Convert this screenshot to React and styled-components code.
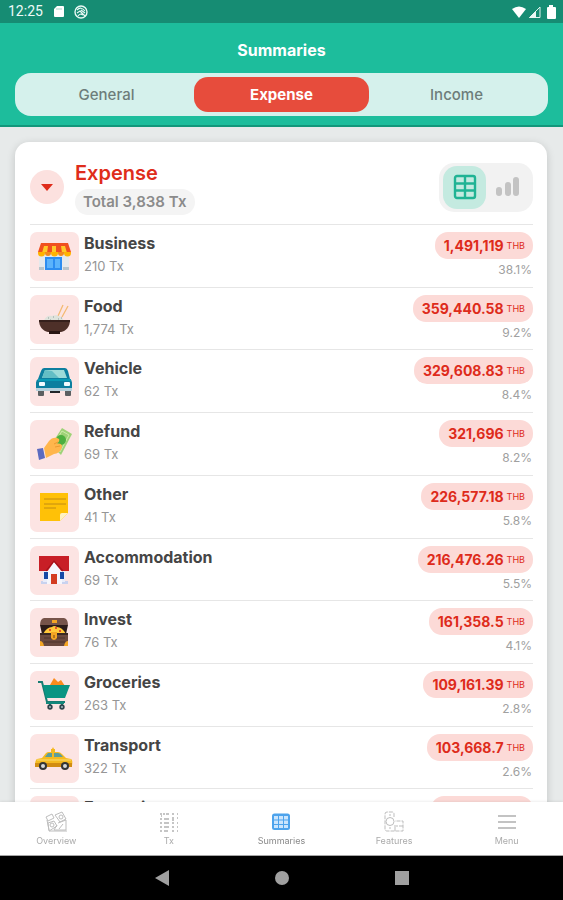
import React, { useState } from "react";
import styled, { createGlobalStyle } from "styled-components";

const GlobalStyle = createGlobalStyle`
  * { box-sizing: border-box; }
  body { margin: 0; background: #e7eaea; }
  button { font: inherit; border: 0; padding: 0; margin: 0; background: none; cursor: pointer; }
  h1, h2, h3, p, ul { margin: 0; padding: 0; }
  svg { display: block; flex: none; }
`;

const Screen = styled.div`
  height: 100vh;
  display: flex;
  flex-direction: column;
  font-family: "Inter", "Liberation Sans", sans-serif;
  color: #454545;
  overflow: hidden;
`;

const StatusBar = styled.div`
  flex: none;
  height: 23px;
  padding: 0 6px 0 8px;
  background: #168c73;
  color: #eefaf7;
  display: flex;
  align-items: center;
  gap: 10px;
  font: 400 14px/23px Roboto, sans-serif;
`;

const StatusRight = styled.div`
  margin-left: auto;
  display: flex;
  align-items: center;
  gap: 2px;
`;

const Header = styled.header`
  flex: none;
  background: #1dbd9c;
  border-bottom: 2px solid #12977b;
  padding: 16px 15px 9px;
`;

const Title = styled.h1`
  color: #fff;
  font-size: 16px;
  line-height: 22px;
  font-weight: 700;
  text-align: center;
  margin-bottom: 12px;
`;

const Segments = styled.div`
  display: flex;
  padding: 4px;
  border-radius: 16px;
  background: #d5f1ec;
`;

const Segment = styled.button`
  && {
    flex: 1;
    height: 35px;
    border-radius: 14px;
    font-size: 15px;
    font-weight: ${(p) => (p.$active ? 700 : 500)};
    color: ${(p) => (p.$active ? "#fff" : "#6d7d7a")};
    background: ${(p) => (p.$active ? "#e74c3c" : "transparent")};
  }
`;

const Content = styled.main`
  flex: 1;
  min-height: 0;
  overflow-y: auto;
  scrollbar-width: none;
  padding: 15px 16px 15px 15px;
  background: #e7eaea;
`;

const Card = styled.section`
  background: #fff;
  border-radius: 14px;
  padding: 0 14px 0 15px;
  box-shadow: 0 2px 8px rgba(0, 0, 0, 0.16);
`;

const CardHead = styled.div`
  display: flex;
  align-items: center;
  height: 82px;
  padding-top: 8px;
`;

const Collapse = styled.button`
  && {
    width: 34px;
    height: 34px;
    border-radius: 50%;
    background: #fce1df;
    display: grid;
    place-items: center;
    margin-right: 11px;
  }
`;

const HeadText = styled.div`
  display: flex;
  flex-direction: column;
  align-items: flex-start;
  gap: 3px;
`;

const CardTitle = styled.h2`
  color: #df2c1b;
  font-size: 20px;
  line-height: 26px;
  font-weight: 600;
`;

const TotalPill = styled.p`
  background: #f4f4f4;
  color: #8b8b8b;
  border-radius: 13px;
  padding: 0 8px;
  font-size: 15px;
  line-height: 26px;
  font-weight: 600;
`;

const Toggle = styled.div`
  margin-left: auto;
  display: flex;
  background: #f2f2f2;
  border-radius: 15px;
  padding: 3px 4px;
`;

const ToggleButton = styled.button`
  && {
    width: 43px;
    height: 43px;
    border-radius: 14px;
    display: grid;
    place-items: center;
    background: ${(p) => (p.$active ? "#c4eae0" : "transparent")};
  }
`;

const List = styled.ul`
  list-style: none;
  display: grid;
  grid-auto-rows: 1fr;
  min-height: 627px;
`;

const Row = styled.li`
  display: flex;
  align-items: flex-start;
  border-top: 1px solid #e6e6e6;
  padding: 7px 0 5px;
`;

const Tile = styled.div`
  width: 49px;
  height: 49px;
  border-radius: 7px;
  background: #fce4e3;
  margin-right: 5px;
`;

const Labels = styled.div`
  flex: 1;
  min-width: 0;
`;

const Name = styled.h3`
  font-size: 16px;
  line-height: 23px;
  font-weight: 700;
`;

const Count = styled.p`
  font-size: 13px;
  line-height: 22px;
  color: #969696;
`;

const Figures = styled.div`
  display: flex;
  flex-direction: column;
  align-items: flex-end;
`;

const Amount = styled.p`
  background: #fcdad7;
  color: #de2b1b;
  border-radius: 13px;
  padding: 0 8px 0 9px;
  font-size: 14px;
  line-height: 27px;
  font-weight: 700;
  white-space: nowrap;
  display: flex;
  align-items: center;
  gap: 3px;
`;

const Currency = styled.span`
  font-size: 9px;
  font-weight: 400;
`;

const Percent = styled.p`
  font-size: 12px;
  line-height: 22px;
  color: #a0a0a0;
  padding-right: 1px;
`;

const Tabs = styled.nav`
  flex: none;
  display: flex;
  height: 54px;
  background: #fff;
  border-bottom: 1px solid #a5a5a5;
  box-shadow: 0 0 3px rgba(0, 0, 0, 0.12);
  z-index: 1;
`;

const Tab = styled.a`
  flex: 1;
  display: flex;
  flex-direction: column;
  align-items: center;
  padding-top: 9px;
  gap: 2px;
  text-decoration: none;
  font-size: 9px;
  line-height: 12px;
  color: ${(p) => (p.$active ? "#8a8a8a" : "#ababab")};
`;

const SystemBar = styled.div`
  flex: none;
  height: 44px;
  background: #000;
  display: flex;
  justify-content: center;
  align-items: center;
  gap: 104px;
`;

const SystemButton = styled.button`
  && {
    width: 16px;
    height: 16px;
  }
`;

const StoreIcon = () => (
  <>
    <path d="M9 21h30v17H9z" fill="#e5e9ec" />
    <path d="M9 35h5v3H9zM33 35h6v3h-6z" fill="#b8c4ca" />
    <path d="M15 25h17v13H15z" fill="#2c8df0" />
    <path d="M17 27h6v9h-6zM25 27h5v9h-5z" fill="#5bb3fb" />
    <path d="M11 11h27l3 9H8z" fill="#f0501f" />
    <path d="M14 14h4l-1 7h-5zM22 14h4v7h-4zM31 14h4l2 7h-5z" fill="#ffc928" />
    <path d="M8 20h7v1a3 3 0 0 1-7 0zM21 20h7v1a3 3 0 0 1-7 0zM34 20h7v1a3 3 0 0 1-7 0z" fill="#ffb300" />
    <path d="M15 20h6v1a3 3 0 0 1-6 0zM28 20h6v1a3 3 0 0 1-6 0z" fill="#f28a1d" />
  </>
);

const BowlIcon = () => (
  <>
    <path d="m28 21 5-11M32 22l6-11" stroke="#f4ba72" strokeWidth="1.3" />
    <path d="M14 26c1-4 4-6 8-5 4-2 10 0 12 5z" fill="#dfe3dc" />
    <path d="M18 23h1m4-1h1m4 2h1m-9 1h1m10-2h1" stroke="#8fa09b" strokeWidth="1.2" />
    <path d="M9 25h31c0 7-4 11-9 12H18C13 36 9 32 9 25z" fill="#4e3029" />
    <path d="M9 25h31v2H9z" fill="#36201c" />
    <path d="M19 36h11v3H19z" fill="#291613" />
  </>
);

const CarIcon = () => (
  <>
    <rect x="8" y="33" width="6" height="6" rx="1" fill="#5c5f61" />
    <rect x="35" y="33" width="6" height="6" rx="1" fill="#5c5f61" />
    <path d="M14 11h21q2 0 3 3l2 8q2 1 2 4v6H6v-6q0-3 2-4l3-8q1-3 3-3z" fill="#0d7f9f" />
    <path d="M15 13h19l3 8H12z" fill="#9ddbd9" />
    <path d="m15 13 7 1 7 7H12z" fill="#63bec5" />
    <path d="M8 22h33v2H8z" fill="#0a9ab4" />
    <path d="M6 31h36v3H6z" fill="#b7d1dc" />
    <rect x="9" y="25" width="6" height="4" rx="1" fill="#f3fbff" />
    <rect x="34" y="25" width="6" height="4" rx="1" fill="#f3fbff" />
    <path d="M20 34h10v2H20z" fill="#20272b" />
  </>
);

const CashIcon = () => (
  <>
    <path d="m32 8 10 6-11 21-10-10z" fill="#9ed277" />
    <path d="m32 11 7 4-9 17-6-8z" fill="none" stroke="#cdeaa9" />
    <circle cx="31" cy="20" r="5" fill="#4caf3f" />
    <path d="m14 28 5-7c2-3 6-4 8-3l2 1c1 2-1 4-3 5 3-1 6 0 6 2 0 5-5 8-8 8l-8 4z" fill="#ffb64c" />
    <path d="m24 24 4-2m-3 5 5-1" stroke="#ec9931" fill="none" />
    <path d="m7 29 6-1 2 10-6 2z" fill="#5c6bc0" />
  </>
);

const NoteIcon = () => (
  <>
    <path d="M10 10h28v20l-8 8H10z" fill="#ffc107" />
    <path d="M30 38v-6q0-2 2-2h6z" fill="#fff2c3" />
    <path d="M14 16h22M14 21h22M14 25h12" stroke="#c28c12" strokeWidth="1" />
  </>
);

const HouseIcon = () => (
  <>
    <path d="M11 35h27v3H11z" fill="#c9d2ef" />
    <path d="M13 23h22v13H13z" fill="#e9edfa" />
    <path d="M9 10h30v15H9z" fill="#c81e26" />
    <path d="m24 16 8 10v12H17V26z" fill="#f5f6fc" />
    <path d="m16 25 8-10 9 10" fill="none" stroke="#a5121b" strokeWidth="1.2" />
    <path d="M14 26h4v7h-4zM30 26h4v7h-4z" fill="#1749a5" />
    <path d="M21 28h6v10h-6z" fill="#d33c21" />
  </>
);

const ChestIcon = () => (
  <>
    <path d="M14 10h20q4 1 4 7l-2 1H12l-2-1q0-6 4-7z" fill="#76544a" />
    <path d="M10 17h28l-2 9H12z" fill="#2b1b18" />
    <path d="M13 26q4-7 9-7 2-2 5 0 5 0 9 7z" fill="#ffc83a" />
    <path d="M19 22h2m4-2h2m2 3h2" stroke="#e6512d" strokeWidth="2" />
    <path d="M10 26h28v10q-1 2-3 2H13q-3 0-3-3z" fill="#6a493f" />
    <path d="M14 30h21M14 34h21" stroke="#4d342d" />
    <path d="M10 26h28" stroke="#3a2824" strokeWidth="2" />
    <path d="M10 33q3 0 4 5h-4zM38 33q-3 0-4 5h4zM21 24h6v6q-3 4-6 0zM22 12h5v3h-5z" fill="#f4a524" />
    <path d="M24 27v3" stroke="#754414" />
  </>
);

const CartIcon = () => (
  <>
    <path d="m20 14 4-7 4 4 3-2 4 6z" fill="#fb8c1d" />
    <path d="M8 11h4l5 20h18" fill="none" stroke="#167c72" strokeWidth="2" />
    <path d="M13 14h27l-5 13H16z" fill="#0a9583" />
    <path d="m16 32h18M20 36v-4M32 36v-4" stroke="#13877b" strokeWidth="2" />
    <circle cx="20" cy="36" r="2.7" fill="#30434b" />
    <circle cx="32" cy="36" r="2.7" fill="#30434b" />
    <circle cx="20" cy="36" r="1" fill="#a7bac1" />
    <circle cx="32" cy="36" r="1" fill="#a7bac1" />
  </>
);

const TaxiIcon = () => (
  <>
    <path d="M21 18v-3h1l1-2 1 2h1v3z" fill="#f5b81e" />
    <path d="m12 24 4-5q1-1 3-1h9q2 0 4 2l4 4 5 1q2 1 1 7H5q0-6 2-7z" fill="#f4ba20" />
    <path d="m15 23 3-4h4v4zM24 19h4q2 0 5 4h-9z" fill="#5c9e9b" />
    <path d="M5 29h37v4H5z" fill="#d28d11" />
    <path d="M7 26h34" stroke="#fadd70" />
    <circle cx="13" cy="32" r="4" fill="#323536" />
    <circle cx="35" cy="32" r="4" fill="#323536" />
    <circle cx="13" cy="32" r="2" fill="#d6d8d9" />
    <circle cx="35" cy="32" r="2" fill="#d6d8d9" />
  </>
);

const TicketIcon = () => (
  <path d="M10 14h29v7q-4 3 0 6v7H10v-7q4-3 0-6z" fill="#ef8a35" />
);

const categories = [
  { name: "Business", count: "210", amount: "1,491,119", percent: "38.1%", Icon: StoreIcon },
  { name: "Food", count: "1,774", amount: "359,440.58", percent: "9.2%", Icon: BowlIcon },
  { name: "Vehicle", count: "62", amount: "329,608.83", percent: "8.4%", Icon: CarIcon },
  { name: "Refund", count: "69", amount: "321,696", percent: "8.2%", Icon: CashIcon },
  { name: "Other", count: "41", amount: "226,577.18", percent: "5.8%", Icon: NoteIcon },
  { name: "Accommodation", count: "69", amount: "216,476.26", percent: "5.5%", Icon: HouseIcon },
  { name: "Invest", count: "76", amount: "161,358.5", percent: "4.1%", Icon: ChestIcon },
  { name: "Groceries", count: "263", amount: "109,161.39", percent: "2.8%", Icon: CartIcon },
  { name: "Transport", count: "322", amount: "103,668.7", percent: "2.6%", Icon: TaxiIcon },
  { name: "Entertainment", count: "58", amount: "93,240.5", percent: "2.4%", Icon: TicketIcon },
];

const OverviewIcon = () => (
  <g fill="none" stroke="#bdbdbd" strokeWidth="1">
    <path d="m1 6 6-3 2 4-6 3zM10 4l7-3 4 7-6 3zM3 12l6-2 3 5-8 5zM13 12l8-3v10H9l3-5M4 20h18" />
    <circle cx="7" cy="14" r="2" />
    <circle cx="16" cy="6" r="2" />
    <path d="m14 18 4-5M2 9l2 10" />
  </g>
);

const TxIcon = () => (
  <g stroke="#b3b3b3" strokeWidth="1.3">
    <path d="M2 3h2m1 0h2m1 0h3M2 8h2m2 0h5M2 12h2m2 0h5M2 16h2m2 0h5M2 20h2m2 0h4" />
    <path d="M14 3h2m3 0h1M14 7h2m3 0h1M14 12h2m3 0h1M14 16h2m3 0h1M14 20h2m3 0h1M3 5h1m10 4h2" />
  </g>
);

const SummaryIcon = () => (
  <>
    <rect x="2" y="2.5" width="18" height="16.5" rx="2.5" fill="#4da3ec" />
    <path
      d="M4 5h4v3.500H4zM9 5h4v3.500H9zM14 5h4v3.500h-4zM4 9.500h4v3.500H4zM9 9.500h4v3.500H9zM14 9.500h4v3.500h-4zM4 14h4v3H4zM9 14h4v3H9zM14 14h4v3h-4z"
      fill="#cbe5fd"
    />
  </>
);

const FeaturesIcon = () => (
  <g fill="none" stroke="#bdbdbd">
    <path d="M11 6V3q0-2-2-2H4Q2 1 2 3v15q0 2 2 2h16V10h-8M20 15h-7" strokeDasharray="4 1" />
    <circle cx="7" cy="10.500" r="4" />
    <path d="M6 4h2M6 17h2M12 14v6" />
  </g>
);

const MenuIcon = () => <path d="M2 5h18M2 11h18M2 17h18" stroke="#b0b0b0" strokeWidth="1.3" />;

const tabs = [
  { label: "Overview", Icon: OverviewIcon },
  { label: "Tx", Icon: TxIcon },
  { label: "Summaries", Icon: SummaryIcon },
  { label: "Features", Icon: FeaturesIcon },
  { label: "Menu", Icon: MenuIcon },
];

export default function App() {
  const [segment, setSegment] = useState("Expense");
  const [view, setView] = useState("table");

  return (
    <Screen>
      <GlobalStyle />
      <StatusBar>
        <span>12:25</span>
        <svg width="11" height="13" viewBox="0 0 11 13" aria-hidden="true">
          <path d="M4 1h6q1 0 1 1v9q0 1-1 1H2q-1 0-1-1V4z" fill="#fff" />
          <path d="M4 3v2m2-2v2m2-2v2" stroke="#a9d4c9" />
        </svg>
        <svg width="14" height="14" viewBox="0 0 14 14" aria-hidden="true" fill="none" stroke="#e9f8f4">
          <circle cx="7" cy="7" r="6" strokeWidth="1.4" />
          <path d="M3 5q4-4 8 1M3 8l3-2 5 5M4 11q2-3 5-1M7 5l4 3" strokeWidth="1.2" />
        </svg>
        <StatusRight>
          <svg width="14" height="12" viewBox="0 0 14 12" aria-hidden="true">
            <path d="M0 3q7-5 14 0L7 12z" fill="#fff" />
          </svg>
          <svg width="13" height="12" viewBox="0 0 13 12" aria-hidden="true">
            <path d="M1.500 11.500 12 1v10.500z" fill="none" stroke="#dff3ee" />
            <path d="M1 12 8 5v7z" fill="#e9f8f4" />
          </svg>
          <svg width="14" height="14" viewBox="0 0 14 14" aria-hidden="true">
            <path d="M6 0h4v2h2q1 0 1 1v10q0 1-1 1H5q-1 0-1-1V3q0-1 1-1h1z" fill="#fff" />
          </svg>
        </StatusRight>
      </StatusBar>

      <Header>
        <Title>Summaries</Title>
        <Segments>
          {["General", "Expense", "Income"].map((label) => (
            <Segment
              key={label}
              type="button"
              $active={segment === label}
              aria-pressed={segment === label}
              onClick={() => setSegment(label)}
            >
              {label}
            </Segment>
          ))}
        </Segments>
      </Header>

      <Content>
        <Card>
          <CardHead>
            <Collapse type="button" aria-label="Collapse expense list">
              <svg width="14" height="8" viewBox="0 0 14 8">
                <path d="M1 1h12L7 8z" fill="#df2c1b" />
              </svg>
            </Collapse>
            <HeadText>
              <CardTitle>Expense</CardTitle>
              <TotalPill>Total 3,838 Tx</TotalPill>
            </HeadText>
            <Toggle>
              <ToggleButton
                type="button"
                aria-label="Table view"
                $active={view === "table"}
                onClick={() => setView("table")}
              >
                <svg width="24" height="26" viewBox="0 0 24 26" fill="none" stroke="#20b394" strokeWidth="2.4">
                  <rect x="2" y="2" width="20" height="22" rx="2" />
                  <path d="M12 2v22M2 9.500h20M2 16.500h20" />
                </svg>
              </ToggleButton>
              <ToggleButton
                type="button"
                aria-label="Chart view"
                $active={view === "chart"}
                onClick={() => setView("chart")}
              >
                <svg width="24" height="20" viewBox="0 0 24 20" fill="#c3c3c3">
                  <rect x="0" y="10" width="6" height="9" rx="3" />
                  <rect x="9" y="5" width="6" height="14" rx="3" />
                  <rect x="17" y="0" width="6" height="19" rx="3" />
                </svg>
              </ToggleButton>
            </Toggle>
          </CardHead>
          <List>
            {categories.map(({ name, count, amount, percent, Icon }) => (
              <Row key={name}>
                <Tile>
                  <svg width="49" height="49" viewBox="0 0 49 49" aria-hidden="true">
                    <Icon />
                  </svg>
                </Tile>
                <Labels>
                  <Name>{name}</Name>
                  <Count>{count} Tx</Count>
                </Labels>
                <Figures>
                  <Amount>
                    {amount}
                    <Currency>THB</Currency>
                  </Amount>
                  <Percent>{percent}</Percent>
                </Figures>
              </Row>
            ))}
          </List>
        </Card>
      </Content>

      <Tabs aria-label="Main">
        {tabs.map(({ label, Icon }) => (
          <Tab key={label} href={`#${label.toLowerCase()}`} $active={label === "Summaries"}>
            <svg width="22" height="22" viewBox="0 0 22 22" aria-hidden="true">
              <Icon />
            </svg>
            {label}
          </Tab>
        ))}
      </Tabs>

      <SystemBar>
        <SystemButton type="button" aria-label="Back">
          <svg width="16" height="16" viewBox="0 0 16 16">
            <path d="M15 0v16L1 8z" fill="#a0a0a0" />
          </svg>
        </SystemButton>
        <SystemButton type="button" aria-label="Home">
          <svg width="16" height="16" viewBox="0 0 16 16">
            <circle cx="8" cy="8" r="7" fill="#a0a0a0" />
          </svg>
        </SystemButton>
        <SystemButton type="button" aria-label="Recent apps">
          <svg width="16" height="16" viewBox="0 0 16 16">
            <path d="M1 1h14v14H1z" fill="#a0a0a0" />
          </svg>
        </SystemButton>
      </SystemBar>
    </Screen>
  );
}
